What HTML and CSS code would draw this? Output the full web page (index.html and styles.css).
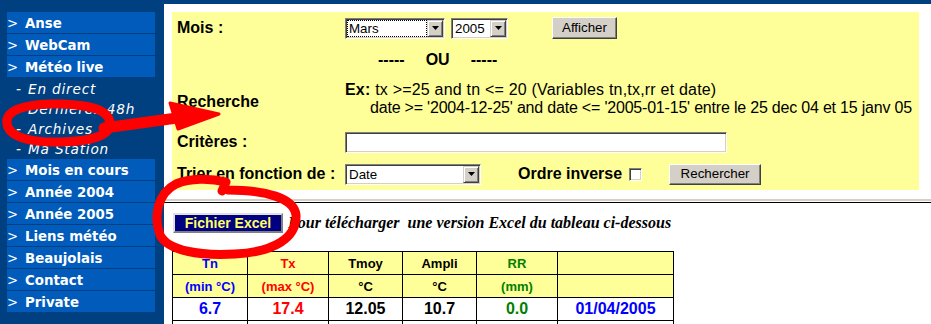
FILE: index.html
```html
<!DOCTYPE html>
<html lang="fr">
<head>
    <meta charset="UTF-8">
    <title>Archives - Météo Anse</title>
    <link rel="stylesheet" href="styles.css">
</head>
<body>
    <div class="menu">
        <div class="menu-item"><span class="arrow">&gt;</span>Anse</div>
        <div class="menu-item"><span class="arrow">&gt;</span>WebCam</div>
        <div class="menu-item"><span class="arrow">&gt;</span>Météo live</div>
        <div class="submenu">
            <div class="sub-item"><span class="dash">-</span>En direct</div>
            <div class="sub-item"><span class="dash">-</span>Dernières 48h</div>
            <div class="sub-item"><span class="dash">-</span>Archives</div>
            <div class="sub-item"><span class="dash">-</span>Ma Station</div>
        </div>
        <div class="menu-item"><span class="arrow">&gt;</span>Mois en cours</div>
        <div class="menu-item"><span class="arrow">&gt;</span>Année 2004</div>
        <div class="menu-item"><span class="arrow">&gt;</span>Année 2005</div>
        <div class="menu-item"><span class="arrow">&gt;</span>Liens météo</div>
        <div class="menu-item"><span class="arrow">&gt;</span>Beaujolais</div>
        <div class="menu-item"><span class="arrow">&gt;</span>Contact</div>
        <div class="menu-item"><span class="arrow">&gt;</span>Private</div>
    </div>

    <div class="main">
        <div class="search">
            <div class="row row-mois">
                <div class="label">Mois :</div>
                <div class="field">
                    <span class="combo combo-month">
                        <span class="combo-val focused">Mars</span>
                        <span class="combo-btn"><svg width="7" height="4"><polygon points="0,0 7,0 3.5,4"/></svg></span>
                    </span>
                    <span class="combo combo-year">
                        <span class="combo-val">2005</span>
                        <span class="combo-btn"><svg width="7" height="4"><polygon points="0,0 7,0 3.5,4"/></svg></span>
                    </span>
                    <span class="btn btn-show">Afficher</span>
                </div>
            </div>
            <div class="row row-ou">
                <div class="label"></div>
                <div class="field ou">
                    <span>-----</span><span>OU</span><span>-----</span>
                </div>
            </div>
            <div class="row row-recherche">
                <div class="label label-recherche">Recherche</div>
                <div class="field example">
                    <div class="line1"><b>Ex:</b> tx &gt;=25 and tn &lt;= 20 (Variables tn,tx,rr et date)</div>
                    <div class="line2">date &gt;= '2004-12-25' and date &lt;= '2005-01-15' entre le 25 dec 04 et 15 janv 05</div>
                </div>
            </div>
            <div class="row row-criteres">
                <div class="label">Critères :</div>
                <div class="field"><span class="textbox"></span></div>
            </div>
            <div class="row row-trier">
                <div class="label">Trier en fonction de :</div>
                <div class="field">
                    <span class="combo combo-sort">
                        <span class="combo-val">Date</span>
                        <span class="combo-btn"><svg width="7" height="4"><polygon points="0,0 7,0 3.5,4"/></svg></span>
                    </span>
                    <span class="label-inline">Ordre inverse</span>
                    <span class="checkbox"></span>
                    <span class="btn btn-search">Rechercher</span>
                </div>
            </div>
        </div>

        <div class="rule"></div>

        <div class="excel">
            <span class="btn-excel">Fichier Excel</span>
            <span class="excel-note">Pour télécharger&nbsp; une version Excel du tableau ci-dessous</span>
        </div>

        <table class="data">
            <colgroup>
                <col class="c1"><col class="c2"><col class="c3"><col class="c4"><col class="c5"><col class="c6">
            </colgroup>
            <tr class="head">
                <td class="blue">Tn</td><td class="red">Tx</td><td>Tmoy</td><td>Ampli</td><td class="green">RR</td><td></td>
            </tr>
            <tr class="head">
                <td class="blue">(min °C)</td><td class="red">(max °C)</td><td>°C</td><td>°C</td><td class="green">(mm)</td><td></td>
            </tr>
            <tr class="values">
                <td class="blue">6.7</td><td class="red">17.4</td><td>12.05</td><td>10.7</td><td class="green">0.0</td><td class="blue">01/04/2005</td>
            </tr>
            <tr class="values">
                <td></td><td></td><td></td><td></td><td></td><td></td>
            </tr>
        </table>
    </div>

    <svg class="marks" width="931" height="324">
        <path d="M60 104 C20 103 5 112 7 124 C9 137 30 143 62 142 C96 141 111 134 110 123 C109 111 95 105 60 104 Z"/>
        <path d="M104 128 L177 118" class="shaft"/>
        <polygon points="170,103 219,114 178,129" class="head"/>
        <path d="M222 191 L226 182 C210 178 190 178 176 184 C158 193 153 216 160 235 C168 251 200 256 235 254 C274 252 297 238 296 215 C294 198 266 190 228 190"/>
    </svg>
</body>
</html>
```

FILE: styles.css
```css
html, body {
    height: 100%;
}
body {
    margin: 0;
    display: flex;
    position: relative;
    background-color: #004080;
    font-family: "Liberation Sans", Arial, sans-serif;
    color: #000;
}

/* menu de gauche */
.menu {
    width: 148px;
    flex-shrink: 0;
    padding: 12px 9px 0 7px;
}
.menu-item {
    height: 17px;
    padding-top: 4px;
    line-height: 21px;
    border-bottom: 1px solid #004080;
    background-color: #005bbb;
    color: #fff;
    font: bold 13.33px "DejaVu Sans", Verdana, sans-serif;
    white-space: nowrap;
}
.menu-item .arrow {
    display: inline-block;
    width: 18px;
    font-weight: normal;
}
.submenu {
    padding-bottom: 1px;
}
.sub-item {
    height: 17px;
    padding-top: 3px;
    line-height: 20px;
    padding-left: 9px;
    color: #fff;
    font: italic 13.67px "DejaVu Sans", Verdana, sans-serif;
    letter-spacing: 0.8px;
    white-space: nowrap;
}
.sub-item .dash {
    display: inline-block;
    width: 12px;
}

/* zone principale */
.main {
    flex: 1;
    margin-top: 4px;
    padding: 8px 0 0 8px;
    background-color: #fff;
    overflow: hidden;
}
.search {
    width: 747px;
    padding-left: 5px;
    box-sizing: border-box;
    background-color: #ffff99;
    padding-bottom: 4px;
}
.row {
    display: flex;
    align-items: center;
}
.row-mois { height: 32px; }
.row-ou { height: 32px; }
.row-recherche { height: 46px; }
.row-criteres { height: 40px; }
.row-trier { height: 24px; }
.label {
    width: 168px;
    flex-shrink: 0;
    font-size: 16px;
    font-weight: bold;
}
.label-recherche {
    padding-top: 5px;
}
.field {
    display: flex;
    align-items: center;
}
.ou {
    padding-left: 33px;
    font-size: 16px;
    font-weight: bold;
    gap: 21px;
}
.example {
    display: block;
    font-size: 16px;
    line-height: 18px;
    white-space: nowrap;
}
.example .line1 {
    letter-spacing: 0.2px;
}
.example .line2 {
    padding-left: 25px;
    letter-spacing: -0.2px;
}
.label-inline {
    margin-left: 37px;
    font-size: 16px;
    font-weight: bold;
}

/* controles facon windows */
.combo {
    display: flex;
    height: 21px;
    box-sizing: border-box;
    padding: 1px;
    border: 1px solid;
    border-color: #808080 #fff #fff #808080;
    box-shadow: inset 1px 1px #404040, inset -1px -1px #d4d0c8;
    background-color: #fff;
    font-size: 13.33px;
}
.combo-month { width: 100px; }
.combo-year { width: 57px; margin-left: 6px; }
.combo-sort { width: 136px; }
.combo-val {
    flex: 1;
    line-height: 17px;
    padding-left: 2px;
}
.combo-val.focused {
    outline: 1px dotted #000;
    outline-offset: -1px;
}
.combo-btn {
    width: 16px;
    height: 17px;
    box-sizing: border-box;
    display: flex;
    align-items: center;
    justify-content: center;
    background-color: #d4d0c8;
    border: 1px solid;
    border-color: #d4d0c8 #404040 #404040 #d4d0c8;
    box-shadow: inset 1px 1px #fff, inset -1px -1px #808080;
}
.combo-btn svg {
    fill: #000;
}
.btn {
    display: inline-block;
    box-sizing: border-box;
    height: 22px;
    line-height: 19px;
    text-align: center;
    font-size: 13.33px;
    background-color: #d4d0c8;
    border: 1px solid;
    border-color: #fff #404040 #404040 #fff;
    box-shadow: inset -1px -1px #808080;
}
.btn-show { width: 65px; margin-left: 44px; }
.btn-search { width: 92px; height: 21px; line-height: 18px; margin-left: 27px; }
.textbox {
    display: block;
    width: 382px;
    height: 21px;
    box-sizing: border-box;
    border: 1px solid;
    border-color: #808080 #fff #fff #808080;
    box-shadow: inset 1px 1px #404040, inset -1px -1px #d4d0c8;
    background-color: #fff;
}
.checkbox {
    display: block;
    width: 13px;
    height: 13px;
    box-sizing: border-box;
    margin-left: 7px;
    border: 1px solid;
    border-color: #808080 #fff #fff #808080;
    box-shadow: inset 1px 1px #404040, inset -1px -1px #d4d0c8;
    background-color: #fff;
}

.rule {
    margin: 9px 0 0 -8px;
    height: 1px;
    border-top: 2px solid #d4d0c8;
    border-bottom: 1px solid #000;
}

/* fichier excel */
.excel {
    display: flex;
    align-items: center;
    margin-top: 10px;
    height: 20px;
}
.btn-excel {
    display: block;
    width: 110px;
    height: 20px;
    box-sizing: border-box;
    margin-left: 1px;
    line-height: 16px;
    text-align: center;
    background-color: #000080;
    color: #ffff66;
    font-size: 14px;
    font-weight: bold;
    border: 2px solid;
    border-color: #e0e0e0 #808080 #808080 #e0e0e0;
}
.excel-note {
    margin-left: 5px;
    font: italic bold 16px "Liberation Serif", "Times New Roman", serif;
    white-space: nowrap;
}

/* tableau */
.data {
    margin-top: 18px;
    border-collapse: collapse;
    table-layout: fixed;
    width: 501px;
}
.data .c1 { width: 75px; }
.data .c2 { width: 81px; }
.data .c3 { width: 74px; }
.data .c4 { width: 74px; }
.data .c5 { width: 81px; }
.data .c6 { width: 116px; }
.data tr {
    height: 23px;
}
.data td {
    border: 1px solid #000;
    padding: 0;
    text-align: center;
    font-weight: bold;
    font-size: 13px;
}
.data .head td {
    background-color: #ffff99;
}
.data .values td {
    font-size: 16px;
    background-color: #fff;
}
.blue { color: #0000ff; }
.red { color: #ff0000; }
.green { color: #008000; }

/* traits rouges */
.marks {
    position: absolute;
    top: 0;
    left: 0;
    pointer-events: none;
    fill: none;
    stroke: #ff0000;
    stroke-width: 9;
    stroke-linecap: round;
    stroke-linejoin: round;
}
.marks .shaft {
    stroke-width: 11;
}
.marks .head {
    fill: #ff0000;
    stroke-width: 3;
}
```
